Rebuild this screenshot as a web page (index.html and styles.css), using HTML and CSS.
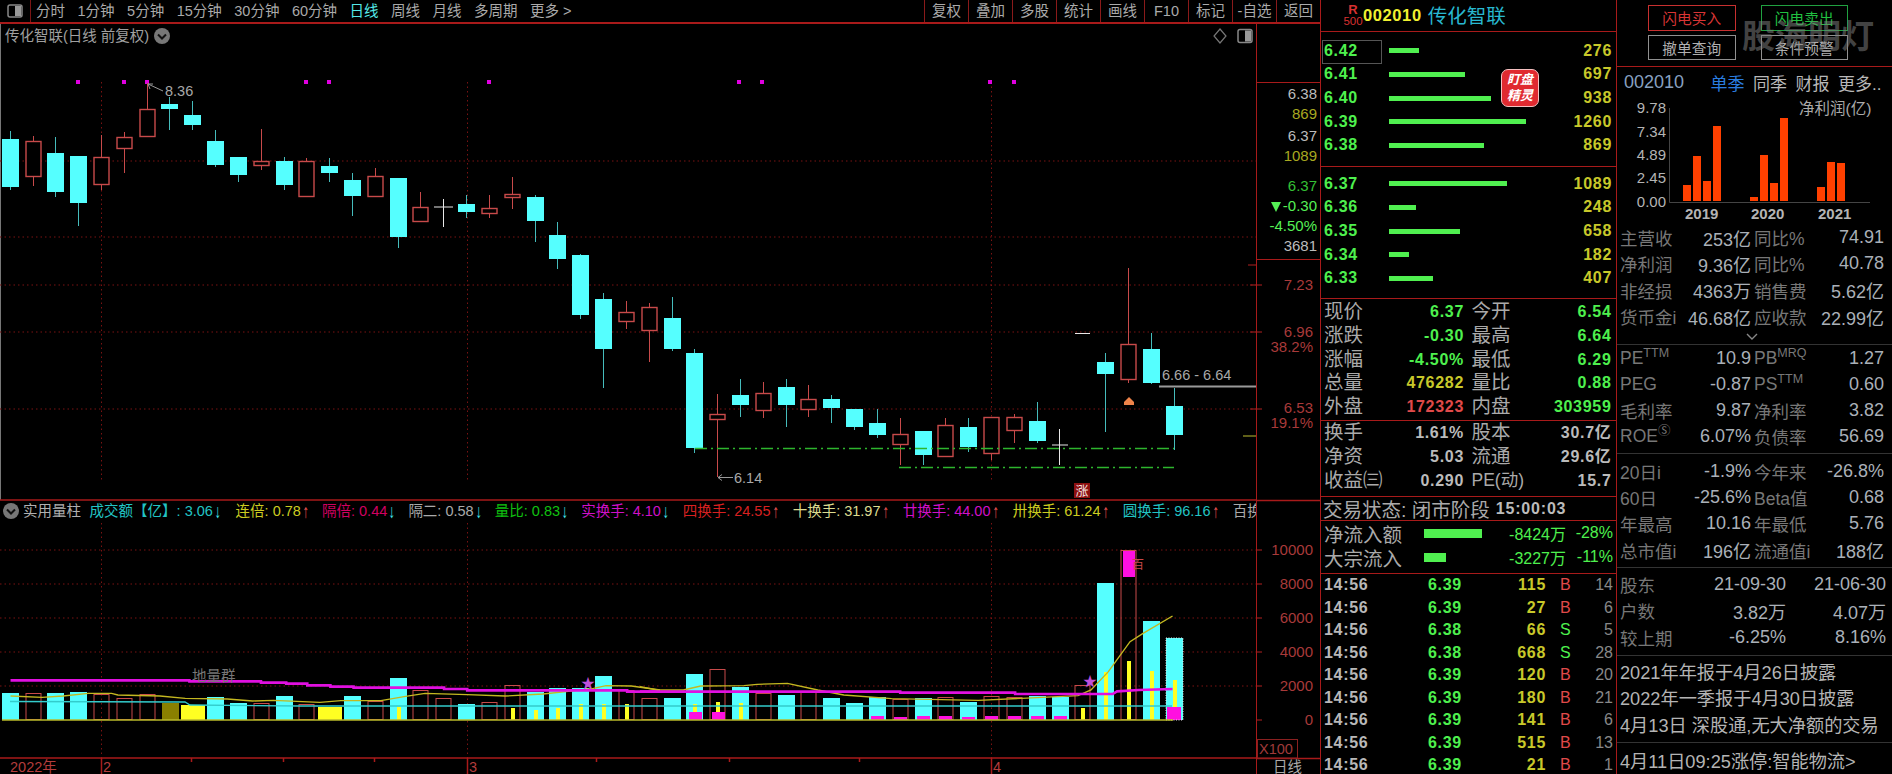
FILE: index.html
```html
<!DOCTYPE html>
<html lang="zh-CN">
<head>
<meta charset="utf-8">
<title>传化智联</title>
<link rel="stylesheet" href="styles.css">
</head>
<body>
<div class="app">
  <div class="main">
    <div class="toolbar">
      <div class="tb-icon">
        <svg class="panel-ico" width="16" height="14" viewBox="0 0 16 14"><rect x="1" y="1" width="14" height="12" rx="2" fill="none" stroke="#888" stroke-width="1.5"/><rect x="8" y="2" width="6" height="10" fill="#999"/></svg>
      </div>
      <div class="periods">
        <span>分时</span><span>1分钟</span><span>5分钟</span><span>15分钟</span><span>30分钟</span><span>60分钟</span><span class="on">日线</span><span>周线</span><span>月线</span><span>多周期</span><span>更多 &gt;</span>
      </div>
      <div class="tools">
        <span>复权</span><span>叠加</span><span>多股</span><span>统计</span><span>画线</span><span>F10</span><span>标记</span><span>-自选</span><span>返回</span>
      </div>
    </div>
    <div class="stage">
      <div class="plot">
        <svg class="chart" width="1256" height="750" viewBox="0 24 1256 750">
          <path class="edge" d="M.5 24V500"/>
          <!-- grid -->
          <path class="grid" d="M0 161H1256M0 237H1256M0 285H1256M0 332H1256M0 409H1256M0 550H1256M0 584H1256M0 618H1256M0 652H1256M0 686H1256"/>
          <path class="grid" d="M101.5 82V480M467.5 82V480M991.5 82V480M101.5 523V758M467.5 523V758M991.5 523V758"/>
          <path class="pane" d="M0 500H1256M0 758H1256"/>
          <!-- signal dots -->
          <g class="dot">
            <rect x="76" y="80" width="4" height="4"/><rect x="122" y="80" width="4" height="4"/><rect x="145" y="80" width="4" height="4"/><rect x="304" y="80" width="4" height="4"/><rect x="327" y="80" width="4" height="4"/><rect x="487" y="80" width="4" height="4"/><rect x="737" y="80" width="4" height="4"/><rect x="760" y="80" width="4" height="4"/><rect x="988" y="80" width="4" height="4"/><rect x="1012" y="80" width="4" height="4"/>
          </g>
          <!-- wicks -->
          <path class="wick-d" d="M10.5 131V190M55.5 137V197M78.5 156V226M169.5 97V130M192.5 101V130M215.5 130V167M238.5 157V182M284.5 157V190M329.5 158V182M352.5 173V216M398.5 178V248M466.5 195V218M535.5 195V242M557.5 222V269M580.5 254V319M603.5 293V388M672.5 297V351M694.5 349V453M740.5 379V417M786.5 379V427M831.5 395V423M854.5 409V430M877.5 409V438M923.5 431V465M968.5 418V452M1037.5 402V443M1105.5 353V432M1151.5 333V384M1174.5 388V450"/>
          <path class="wick-u" d="M33.5 136V186M101.5 135V190M124.5 132V173M147.5 83V136M261.5 129V170M306.5 158V196M375.5 168V196M420.5 192V221M489.5 195V218M512.5 177V209M626.5 301V329M649.5 303V362M717.5 394V477M763.5 382V418M808.5 385V417M900.5 418V465M945.5 418V456M991.5 417V460M1014.5 414V443M1128.5 268V383"/>
          <path class="wick-w" d="M443.5 199V227M434 207H453M1059.5 429V465M1052 445H1068M1075 333.5H1090"/>
          <!-- bodies, falling -->
          <g class="body-d">
            <rect x="2" y="139" width="17" height="48"/><rect x="47" y="153" width="17" height="39"/><rect x="70" y="156" width="17" height="47"/><rect x="161" y="104" width="17" height="5"/><rect x="184" y="115" width="17" height="10"/><rect x="207" y="141" width="17" height="24"/><rect x="230" y="157" width="17" height="18"/><rect x="276" y="161" width="17" height="24"/><rect x="321" y="166" width="17" height="7"/><rect x="344" y="180" width="17" height="16"/><rect x="390" y="178" width="17" height="59"/><rect x="458" y="204" width="17" height="8"/><rect x="527" y="197" width="17" height="24"/><rect x="549" y="235" width="17" height="24"/><rect x="572" y="255" width="17" height="60"/><rect x="595" y="299" width="17" height="50"/><rect x="664" y="318" width="17" height="31"/><rect x="686" y="353" width="17" height="95"/><rect x="732" y="395" width="17" height="10"/><rect x="778" y="387" width="17" height="18"/><rect x="823" y="399" width="17" height="9"/><rect x="846" y="409" width="17" height="18"/><rect x="869" y="423" width="17" height="12"/><rect x="915" y="431" width="17" height="24"/><rect x="960" y="427" width="17" height="20"/><rect x="1029" y="421" width="17" height="20"/><rect x="1097" y="362" width="17" height="12"/><rect x="1143" y="349" width="17" height="34"/><rect x="1166" y="406" width="17" height="29"/>
          </g>
          <!-- bodies, rising -->
          <g class="body-u">
            <rect x="26" y="141.5" width="15" height="35"/><rect x="94" y="157.5" width="15" height="27"/><rect x="117" y="137.5" width="15" height="11"/><rect x="140" y="109.5" width="15" height="27"/><rect x="254" y="161.5" width="15" height="4"/><rect x="299" y="161.5" width="15" height="35"/><rect x="368" y="176.5" width="15" height="20"/><rect x="413" y="207.5" width="15" height="14"/><rect x="482" y="208.5" width="15" height="5"/><rect x="505" y="194.5" width="15" height="3"/><rect x="619" y="312.5" width="15" height="9"/><rect x="642" y="307.5" width="15" height="23"/><rect x="710" y="414.5" width="15" height="5"/><rect x="756" y="393.5" width="15" height="17"/><rect x="801" y="399.5" width="15" height="10"/><rect x="893" y="434.5" width="15" height="10"/><rect x="938" y="425.5" width="15" height="31"/><rect x="984" y="417.5" width="15" height="36"/><rect x="1007" y="417.5" width="15" height="13"/><rect x="1121" y="344.5" width="15" height="35"/>
          </g>
          <!-- price annotations -->
          <path class="note-line" d="M163 91L148 84M148 84L153 84M148 84L150 89M733 477.5H718M718 477.5L722 474.5M718 477.5L722 480.5"/>
          <text class="note" x="165" y="96">8.36</text>
          <text class="note" x="734" y="483">6.14</text>
          <text class="note" x="1162" y="380">6.66 - 6.64</text>
          <path class="support" d="M695 448.5H1174M899 467.5H1174"/>
          <path class="resist" d="M1159 386.5H1256"/>
          <path class="tri" d="M1129 397l5 5v3h-10v-3z"/>
          <path class="tick" d="M1248 265H1256M1250 285H1256M1250 332H1256M1250 409H1256"/>
          <path class="tick-o" d="M1243 436H1256"/>
          <rect class="limit" x="1074" y="483" width="16" height="15"/>
          <text class="limit-t" x="1082" y="495">涨</text>

          <!-- volume -->
          <g class="vol-d">
            <rect x="2" y="693" width="17" height="27"/><rect x="47" y="693" width="17" height="27"/><rect x="70" y="692" width="17" height="28"/><rect x="207" y="697" width="17" height="23"/><rect x="230" y="703" width="17" height="17"/><rect x="276" y="696" width="17" height="24"/><rect x="344" y="696" width="17" height="24"/><rect x="390" y="678" width="17" height="42"/><rect x="458" y="704" width="17" height="16"/><rect x="527" y="692" width="17" height="28"/><rect x="549" y="688" width="17" height="32"/><rect x="572" y="688" width="17" height="32"/><rect x="595" y="676" width="17" height="44"/><rect x="664" y="698" width="17" height="22"/><rect x="686" y="674" width="17" height="46"/><rect x="732" y="687" width="17" height="33"/><rect x="778" y="695" width="17" height="25"/><rect x="823" y="698" width="17" height="22"/><rect x="846" y="703" width="17" height="17"/><rect x="869" y="697" width="17" height="23"/><rect x="915" y="698" width="17" height="22"/><rect x="960" y="702" width="17" height="18"/><rect x="1029" y="696" width="17" height="24"/><rect x="1052" y="697" width="17" height="23"/><rect x="1097" y="583" width="17" height="137"/><rect x="1143" y="621" width="17" height="99"/><rect x="1166" y="638" width="17" height="82"/>
          </g>
          <g class="vol-u">
            <rect x="26" y="693.5" width="15" height="26"/><rect x="94" y="694.5" width="15" height="25"/><rect x="117" y="698.5" width="15" height="21"/><rect x="140" y="694.5" width="15" height="25"/><rect x="254" y="703.5" width="15" height="16"/><rect x="299" y="704.5" width="15" height="15"/><rect x="368" y="701.5" width="15" height="18"/><rect x="413" y="690.5" width="15" height="29"/><rect x="436" y="698.5" width="15" height="21"/><rect x="482" y="702.5" width="15" height="17"/><rect x="505" y="685.5" width="15" height="34"/><rect x="619" y="690.5" width="15" height="29"/><rect x="642" y="698.5" width="15" height="21"/><rect x="710" y="669.5" width="15" height="50"/><rect x="756" y="693.5" width="15" height="26"/><rect x="801" y="691.5" width="15" height="28"/><rect x="893" y="699.5" width="15" height="20"/><rect x="938" y="697.5" width="15" height="22"/><rect x="984" y="696.5" width="15" height="23"/><rect x="1007" y="697.5" width="15" height="22"/><rect x="1075" y="685.5" width="15" height="34"/><rect x="1121" y="550.5" width="15" height="169"/>
          </g>
          <rect class="vol-o" x="162" y="703" width="17" height="17"/>
          <rect class="vol-y" x="181" y="705" width="24" height="15"/>
          <rect class="vol-y" x="318" y="707" width="24" height="13"/>
          <g class="vol-y">
            <rect x="397" y="707" width="4" height="13"/><rect x="511" y="708" width="4" height="12"/><rect x="534" y="710" width="4" height="10"/><rect x="556" y="708" width="4" height="12"/><rect x="579" y="704" width="4" height="16"/><rect x="602" y="704" width="4" height="16"/><rect x="625" y="704" width="4" height="16"/><rect x="693" y="704" width="4" height="16"/><rect x="716" y="702" width="4" height="18"/><rect x="739" y="703" width="4" height="17"/><rect x="1081" y="708" width="4" height="12"/><rect x="1104" y="672" width="4" height="48"/><rect x="1127" y="661" width="4" height="59"/><rect x="1150" y="671" width="4" height="49"/><rect x="1173" y="680" width="4" height="40"/>
          </g>
          <g class="vol-m">
            <rect x="689" y="712" width="13" height="8"/><rect x="712" y="712" width="13" height="8"/><rect x="871" y="716" width="13" height="4"/><rect x="894" y="717" width="13" height="3"/><rect x="917" y="716" width="13" height="4"/><rect x="939" y="716" width="13" height="4"/><rect x="962" y="717" width="13" height="3"/><rect x="985" y="716" width="13" height="4"/><rect x="1008" y="716" width="13" height="4"/><rect x="1031" y="716" width="13" height="4"/><rect x="1054" y="716" width="13" height="4"/><rect x="1123" y="551" width="12" height="26"/><rect x="1167" y="707" width="14" height="13"/>
          </g>
          <rect class="vol-dash" x="1166" y="638" width="17" height="82"/>
          <text class="vol-note" x="1132" y="569">百</text>
          <path class="base" d="M2 720H1173"/>
          <polyline class="line-t" points="10,701.5 185,702 190,705 300,706 1172,706"/>
          <g transform="translate(0 490) scale(.42092 .33333)">
            <polyline class="line-g" points="25,618 100,622 150,618 210,610 265,610 280,615 380,618 440,625 540,627 600,633 650,631 760,637 810,632 905,632 960,620 1010,610 1110,614 1200,618 1290,612 1350,604 1410,595 1440,587 1500,588 1568,600"/>
            <polyline class="line-m" points="25,571 450,571 450,574 620,574 620,578 680,578 680,581 730,581 730,586 785,586 785,590 840,590 840,593 1055,593 1055,597 1110,597 1110,601 1490,601 1490,605 1568,605"/>
          </g>
          <g transform="translate(640 490) scale(.43367 .33333)">
            <polyline class="line-g" points="0,590 40,600 100,600 140,588 240,587 270,583 340,580 410,600 470,615 580,626 780,631 880,625 1010,617 1040,600 1080,545 1130,455 1160,430 1228,378"/>
            <polyline class="line-m" points="0,605 600,605 600,608 865,608 865,612 1090,612 1100,604 1150,600 1228,597"/>
          </g>
          <text class="star" x="581" y="688">★</text>
          <text class="star" x="1083" y="686">★</text>
          <text class="ghost" x="192" y="681">地量群</text>
          <!-- date axis -->
          <path class="pane" d="M101.5 758V774M467.5 758V774M991.5 758V774M191.5 758V762M283.5 758V762M374.5 758V762M596.5 758V762M729.5 758V762M859.5 758V762"/>
          <text class="date" x="10" y="772">2022年</text>
          <text class="date" x="103" y="772">2</text>
          <text class="date" x="469" y="772">3</text>
          <text class="date" x="993" y="772">4</text>
        </svg>
        <div class="pane-title">
          <span>传化智联(日线 前复权)</span>
          <svg class="chev" width="16" height="16" viewBox="0 0 16 16"><circle cx="8" cy="8" r="8" fill="#777"/><path d="M4 6.5L8 10.5L12 6.5" fill="none" stroke="#111" stroke-width="2"/></svg>
        </div>
        <div class="pane-tools">
          <svg width="14" height="16" viewBox="0 0 14 16"><path d="M7 1L13 8L7 15L1 8Z" fill="none" stroke="#777" stroke-width="1.2"/></svg>
          <svg width="16" height="16" viewBox="0 0 16 16"><rect x="1" y="1.5" width="14" height="13" rx="2" fill="none" stroke="#888" stroke-width="1.5"/><rect x="8" y="2.5" width="6" height="11" fill="#999"/></svg>
        </div>
        <div class="indicators">
          <span class="ind i-name"><svg class="chev chev-s" width="16" height="16" viewBox="0 0 16 16"><circle cx="8" cy="8" r="8" fill="#777"/><path d="M4 6.5L8 10.5L12 6.5" fill="none" stroke="#111" stroke-width="2"/></svg>实用量柱</span>
          <span class="ind w146 c-teal">成交额【亿】: 3.06<b class="dn">↓</b></span>
          <span class="ind w86 c-yel">连倍: 0.78<b class="up">↑</b></span>
          <span class="ind w86 c-crim">隔倍: 0.44<b class="dn">↓</b></span>
          <span class="ind w86 c-gray">隔二: 0.58<b class="dn">↓</b></span>
          <span class="ind w86 c-green">量比: 0.83<b class="dn">↓</b></span>
          <span class="ind w101 c-mag">实换手: 4.10<b class="dn">↓</b></span>
          <span class="ind w110 c-red">四换手: 24.55<b class="up">↑</b></span>
          <span class="ind w110 c-pale">十换手: 31.97<b class="up">↑</b></span>
          <span class="ind w110 c-mag">廿换手: 44.00<b class="up">↑</b></span>
          <span class="ind w110 c-yel">卅换手: 61.24<b class="up">↑</b></span>
          <span class="ind w110 c-teal">圆换手: 96.16<b class="up">↑</b></span>
          <span class="ind c-gray">百换手</span>
        </div>
      </div>
      <div class="axis">
        <div class="ax-top"></div>
        <div class="ax-info">
          <div class="ax-row c-white">6.38</div>
          <div class="ax-row c-olive">869</div>
          <div class="ax-row c-white ax-gap">6.37</div>
          <div class="ax-row c-olive">1089</div>
          <div class="ax-row c-dgreen ax-gap-l">6.37</div>
          <div class="ax-row c-lgreen"><i class="dn-tri"></i>-0.30</div>
          <div class="ax-row c-lgreen">-4.50%</div>
          <div class="ax-row c-white">3681</div>
        </div>
        <svg class="ax-svg" width="63" height="514" viewBox="1257 260 63 514">
          <path class="tick" d="M1257 285H1262M1257 332H1262M1257 409H1262M1257 550H1262M1257 584H1262M1257 618H1262M1257 652H1262M1257 686H1262M1257 720H1262"/>
          <path class="ax-line" d="M1256 500.5H1320M1256 758.5H1320"/>
          <g class="ax-t">
            <text x="1313" y="290">7.23</text>
            <text x="1313" y="337">6.96</text>
            <text x="1313" y="352">38.2%</text>
            <text x="1313" y="413">6.53</text>
            <text x="1313" y="428">19.1%</text>
            <text x="1313" y="555">10000</text>
            <text x="1313" y="589">8000</text>
            <text x="1313" y="623">6000</text>
            <text x="1313" y="657">4000</text>
            <text x="1313" y="691">2000</text>
            <text x="1313" y="725">0</text>
          </g>
          <rect class="x100" x="1257.5" y="739.5" width="40" height="18.5"/>
          <text class="x100-t" x="1259" y="754">X100</text>
          <text class="ax-day" x="1273" y="772">日线</text>
        </svg>
      </div>
    </div>
  </div>

  <div class="quote">
    <div class="q-head">
      <div class="logo-r"><b>R</b><span>500</span></div>
      <span class="q-code">002010</span>
      <span class="q-name">传化智联</span>
    </div>
    <div class="book book-s">
      <div class="b-row"><span class="b-p active">6.42</span><i class="b-bar" style="width:30px"></i><span class="b-v">276</span></div>
      <div class="b-row"><span class="b-p">6.41</span><i class="b-bar" style="width:76px"></i><span class="b-v">697</span></div>
      <div class="b-row"><span class="b-p">6.40</span><i class="b-bar" style="width:102px"></i><span class="b-v">938</span></div>
      <div class="b-row"><span class="b-p">6.39</span><i class="b-bar" style="width:137px"></i><span class="b-v">1260</span></div>
      <div class="b-row"><span class="b-p">6.38</span><i class="b-bar" style="width:95px"></i><span class="b-v">869</span></div>
    </div>
    <div class="book book-b">
      <div class="b-row"><span class="b-p">6.37</span><i class="b-bar" style="width:118px"></i><span class="b-v">1089</span></div>
      <div class="b-row"><span class="b-p">6.36</span><i class="b-bar" style="width:27px"></i><span class="b-v">248</span></div>
      <div class="b-row"><span class="b-p">6.35</span><i class="b-bar" style="width:71px"></i><span class="b-v">658</span></div>
      <div class="b-row"><span class="b-p">6.34</span><i class="b-bar" style="width:20px"></i><span class="b-v">182</span></div>
      <div class="b-row"><span class="b-p">6.33</span><i class="b-bar" style="width:44px"></i><span class="b-v">407</span></div>
    </div>
    <div class="badge">盯盘<br>精灵</div>
    <div class="q-tbl q1">
      <div class="kv"><span>现价</span><b class="g">6.37</b></div><div class="kv"><span>今开</span><b class="g">6.54</b></div>
      <div class="kv"><span>涨跌</span><b class="g">-0.30</b></div><div class="kv"><span>最高</span><b class="g">6.64</b></div>
      <div class="kv"><span>涨幅</span><b class="g">-4.50%</b></div><div class="kv"><span>最低</span><b class="g">6.29</b></div>
      <div class="kv"><span>总量</span><b class="y">476282</b></div><div class="kv"><span>量比</span><b class="g">0.88</b></div>
      <div class="kv"><span>外盘</span><b class="r">172323</b></div><div class="kv"><span>内盘</span><b class="g">303959</b></div>
    </div>
    <div class="q-tbl q2">
      <div class="kv"><span>换手</span><b class="w">1.61%</b></div><div class="kv"><span>股本</span><b class="w">30.7亿</b></div>
      <div class="kv"><span>净资</span><b class="w">5.03</b></div><div class="kv"><span>流通</span><b class="w">29.6亿</b></div>
      <div class="kv"><span>收益㈢</span><b class="w">0.290</b></div><div class="kv"><span class="pe">PE(动)</span><b class="w">15.7</b></div>
    </div>
    <div class="status"><span>交易状态: 闭市阶段</span><b>15:00:03</b></div>
    <div class="flows">
      <div class="f-row"><span class="f-l">净流入额</span><i class="f-bar f58"></i><span class="f-v">-8424万</span><span class="f-p">-28%</span></div>
      <div class="f-row"><span class="f-l">大宗流入</span><i class="f-bar f22"></i><span class="f-v">-3227万</span><span class="f-p">-11%</span></div>
    </div>
    <div class="ticks">
      <div class="t-row"><b class="t">14:56</b><b class="p">6.39</b><b class="v">115</b><span class="bs b">B</span><span class="n">14</span></div>
      <div class="t-row"><b class="t">14:56</b><b class="p">6.39</b><b class="v">27</b><span class="bs b">B</span><span class="n">6</span></div>
      <div class="t-row"><b class="t">14:56</b><b class="p">6.38</b><b class="v">66</b><span class="bs s">S</span><span class="n">5</span></div>
      <div class="t-row"><b class="t">14:56</b><b class="p">6.38</b><b class="v">668</b><span class="bs s">S</span><span class="n">28</span></div>
      <div class="t-row"><b class="t">14:56</b><b class="p">6.39</b><b class="v">120</b><span class="bs b">B</span><span class="n">20</span></div>
      <div class="t-row"><b class="t">14:56</b><b class="p">6.39</b><b class="v">180</b><span class="bs b">B</span><span class="n">21</span></div>
      <div class="t-row"><b class="t">14:56</b><b class="p">6.39</b><b class="v">141</b><span class="bs b">B</span><span class="n">6</span></div>
      <div class="t-row"><b class="t">14:56</b><b class="p">6.39</b><b class="v">515</b><span class="bs b">B</span><span class="n">13</span></div>
      <div class="t-row"><b class="t">14:56</b><b class="p">6.39</b><b class="v">21</b><span class="bs b">B</span><span class="n">1</span></div>
    </div>
  </div>

  <div class="side">
    <div class="actions">
      <a class="btn btn-r">闪电买入</a><a class="btn btn-g">闪电卖出</a>
      <a class="btn btn-w">撤单查询</a><a class="btn btn-w">条件预警</a>
      <div class="mark">股海明灯</div>
    </div>
    <div class="tabs">
      <span class="t-code">002010</span><span class="t-on">单季</span><span>同季</span><span>财报</span><span>更多..</span>
    </div>
    <svg class="mini" width="275" height="129" viewBox="1617 97 275 129">
      <path class="mini-ax" d="M1669.5 108V202.5H1870"/>
      <g class="mini-bars">
        <rect x="1683" y="185" width="8" height="16"/><rect x="1693" y="156" width="8" height="45"/><rect x="1703" y="181" width="8" height="20"/><rect x="1713" y="126" width="8" height="75"/>
        <rect x="1750" y="197" width="8" height="4"/><rect x="1760" y="155" width="8" height="46"/><rect x="1770" y="183" width="8" height="18"/><rect x="1780" y="118" width="8" height="83"/>
        <rect x="1817" y="187" width="8" height="14"/><rect x="1827" y="162" width="8" height="39"/><rect x="1837" y="163" width="8" height="38"/>
      </g>
      <g class="mini-y">
        <text x="1666" y="113">9.78</text><text x="1666" y="137">7.34</text><text x="1666" y="160">4.89</text><text x="1666" y="183">2.45</text><text x="1666" y="207">0.00</text>
      </g>
      <g class="mini-x">
        <text x="1685" y="219">2019</text><text x="1751" y="219">2020</text><text x="1818" y="219">2021</text>
      </g>
      <text class="mini-title" x="1799" y="114">净利润(亿)</text>
    </svg>
    <div class="fin g-a">
      <div class="kv"><span>主营收</span><b>253亿</b></div><div class="kv"><span>同比%</span><b>74.91</b></div>
      <div class="kv"><span>净利润</span><b>9.36亿</b></div><div class="kv"><span>同比%</span><b>40.78</b></div>
      <div class="kv"><span>非经损</span><b>4363万</b></div><div class="kv"><span>销售费</span><b>5.62亿</b></div>
      <div class="kv"><span>货币金i</span><b>46.68亿</b></div><div class="kv"><span>应收款</span><b>22.99亿</b></div>
    </div>
    <div class="more"><svg width="12" height="7" viewBox="0 0 12 7"><path d="M1 1L6 6L11 1" fill="none" stroke="#888" stroke-width="1.4"/></svg></div>
    <div class="fin g-b sep">
      <div class="kv"><span>PE<sup>TTM</sup></span><b>10.9</b></div><div class="kv"><span>PB<sup>MRQ</sup></span><b>1.27</b></div>
      <div class="kv"><span>PEG</span><b>-0.87</b></div><div class="kv"><span>PS<sup>TTM</sup></span><b>0.60</b></div>
      <div class="kv"><span>毛利率</span><b>9.87</b></div><div class="kv"><span>净利率</span><b>3.82</b></div>
      <div class="kv"><span>ROE<sup>Ⓢ</sup></span><b>6.07%</b></div><div class="kv"><span>负债率</span><b>56.69</b></div>
    </div>
    <div class="fin g-c sep">
      <div class="kv"><span>20日i</span><b>-1.9%</b></div><div class="kv"><span>今年来</span><b>-26.8%</b></div>
      <div class="kv"><span>60日</span><b>-25.6%</b></div><div class="kv"><span>Beta值</span><b>0.68</b></div>
      <div class="kv"><span>年最高</span><b>10.16</b></div><div class="kv"><span>年最低</span><b>5.76</b></div>
      <div class="kv"><span>总市值i</span><b>196亿</b></div><div class="kv"><span>流通值i</span><b>188亿</b></div>
    </div>
    <div class="fin g-d sep">
      <div class="kv"><span>股东</span><b>21-09-30</b></div><b class="v2">21-06-30</b>
      <div class="kv"><span>户数</span><b>3.82万</b></div><b class="v2">4.07万</b>
      <div class="kv"><span>较上期</span><b>-6.25%</b></div><b class="v2">8.16%</b>
    </div>
    <div class="news sep">
      <div>2021年年报于4月26日披露</div>
      <div>2022年一季报于4月30日披露</div>
      <div>4月13日 深股通,无大净额的交易</div>
    </div>
    <div class="news news-last sep">
      <div>4月11日09:25涨停:智能物流&gt;</div>
    </div>
  </div>
</div>
</body>
</html>
```
FILE: styles.css
```css
* { box-sizing: border-box; }
html, body { margin: 0; padding: 0; background: #000; }
body {
  width: 1892px; height: 774px; overflow: hidden;
  font-family: "Liberation Sans", "Noto Sans CJK SC", "DejaVu Sans", sans-serif;
  color: #aaa;
}
.app { display: flex; width: 1892px; height: 774px; background: #000; overflow: hidden; }
.main { width: 1320px; flex: none; display: flex; flex-direction: column; }

/* toolbar */
.toolbar { display: flex; height: 24px; flex: none; border-bottom: 2px solid #a81a1a; font-size: 14.5px; line-height: 22px; color: #aaa; }
.tb-icon { width: 31px; flex: none; border-right: 1px solid #7a1515; display: flex; align-items: center; justify-content: center; }
.panel-ico { margin-left: -1px; }
.periods { display: flex; gap: 12.5px; padding-left: 5px; white-space: nowrap; }
.periods .on { color: #55e8e8; }
.tools { margin-left: auto; display: flex; }
.tools span { width: 44px; text-align: center; border-left: 1px solid #8a1a1a; white-space: nowrap; }

.stage { display: flex; flex: 1; min-height: 0; }
.plot { position: relative; width: 1256px; height: 750px; flex: none; overflow: hidden; }
.chart { display: block; }

/* chart shapes */
.edge { stroke: #777; stroke-width: 1; fill: none; }
.grid { stroke: #7a1212; stroke-width: 1; stroke-dasharray: 1.5 3; fill: none; }
.pane { stroke: #a81a1a; stroke-width: 1.5; fill: none; }
.dot rect { fill: #e000e0; }
.wick-d { stroke: #45bcbc; stroke-width: 1; fill: none; }
.wick-u { stroke: #c84a4a; stroke-width: 1; fill: none; }
.wick-w { stroke: #e8e8e8; stroke-width: 1; fill: none; }
.body-d rect { fill: #55ffff; }
.body-u rect { fill: #000; stroke: #c84a4a; stroke-width: 1.4; }
.note-line { stroke: #999; stroke-width: 1; fill: none; }
.note { font-size: 14.5px; fill: #a8a8a8; }
.support { stroke: #2db52d; stroke-width: 1.6; stroke-dasharray: 12 4 2 4; fill: none; }
.resist { stroke: #999; stroke-width: 2; fill: none; }
.tri { fill: #f0844a; }
.tick { stroke: #b02020; stroke-width: 1; fill: none; }
.tick-o { stroke: #7f7f20; stroke-width: 1.5; fill: none; }
.limit { fill: #8c1010; }
.limit-t { font-size: 13px; fill: #f0e0e0; text-anchor: middle; }
.vol-d rect { fill: #55ffff; }
.vol-u rect { fill: none; stroke: #c84a4a; stroke-width: 1; }
.vol-o { fill: #8a8000; }
.vol-y, .vol-y rect { fill: #ffff22; }
.vol-m rect { fill: #ff10e0; }
.vol-dash { fill: none; stroke: #e8e8e8; stroke-width: 1; stroke-dasharray: 1 1.5; }
.vol-note { font-size: 12px; fill: #c84a4a; }
.base { stroke: #b9b92a; stroke-width: 1.5; fill: none; }
.line-t { stroke: #3cc; stroke-width: 1.3; fill: none; }
.line-g { stroke: #c4b820; stroke-width: 1.4; fill: none; vector-effect: non-scaling-stroke; }
.line-m { stroke: #e010e0; stroke-width: 2.6; fill: none; vector-effect: non-scaling-stroke; }
.star { font-size: 14px; fill: #c050d8; }
.ghost { font-size: 14.5px; fill: #777; }
.date { font-size: 14.5px; fill: #b43c3c; }

/* overlays on the plot */
.pane-title { position: absolute; left: 5px; top: 3px; display: flex; align-items: center; gap: 5px; font-size: 14.5px; line-height: 18px; color: #a0a0a0; white-space: nowrap; }
.chev { flex: none; }
.pane-tools { position: absolute; right: 3px; top: 4px; display: flex; gap: 10px; }
.indicators { position: absolute; left: 3px; top: 477px; display: flex; width: 1253px; height: 20px; overflow: hidden; font-size: 14.5px; line-height: 20px; white-space: nowrap; }
.ind { flex: none; }
.ind b { display: inline-block; font-size: 19px; font-weight: 400; line-height: 16px; vertical-align: -2px; transform: scaleX(.7); margin-left: 0; }
.i-name { width: 86.6px; color: #b0b0b0; display: flex; align-items: center; gap: 4px; }
.w146 { width: 146px; }
.w86 { width: 86.4px; }
.w101 { width: 101.5px; }
.w110 { width: 110px; }
.c-teal { color: #22c4c4; }
.c-yel { color: #cccc20; }
.c-crim { color: #d00060; }
.c-gray { color: #aaa; }
.c-green { color: #10c010; }
.c-mag { color: #d010c8; }
.c-red { color: #d82020; }
.c-pale { color: #dcdc90; }
.dn { color: #40e0e8; }
.up { color: #e85050; }

/* price axis */
.axis { width: 64px; flex: none; border-left: 1px solid #a81a1a; display: flex; flex-direction: column; }
.ax-top { height: 59px; flex: none; border-bottom: 1px solid #a81a1a; }
.ax-info { height: 177px; flex: none; padding: 1px 3px 0 0; border-bottom: 1px solid #a81a1a; font-size: 15px; text-align: right; }
.ax-row { height: 20px; line-height: 20px; white-space: nowrap; }
.ax-gap { margin-top: 2px; }
.ax-gap-l { margin-top: 10px; }
.c-white { color: #bcbcbc; }
.c-olive { color: #a8a820; }
.c-dgreen { color: #35c035; }
.c-lgreen { color: #55f055; }
.dn-tri { display: inline-block; width: 0; height: 0; margin-right: 2px; border-left: 5px solid transparent; border-right: 5px solid transparent; border-top: 10px solid #55f055; vertical-align: -1px; }
.ax-svg { display: block; flex: none; }
.ax-line { stroke: #a81a1a; stroke-width: 1.5; fill: none; }
.ax-t text { font-size: 15px; fill: #a83a3a; text-anchor: end; }
.x100 { fill: none; stroke: #8a2020; stroke-width: 1; }
.x100-t { font-size: 14.5px; fill: #a03a3a; }
.ax-day { font-size: 14.5px; fill: #aaa; }

/* quote column */
.quote { position: relative; width: 297px; flex: none; border-left: 1px solid #a81a1a; border-right: 1px solid #a81a1a; overflow: hidden; }
.q-head { display: flex; align-items: center; height: 32px; padding-left: 22px; border-bottom: 1px solid #a81a1a; white-space: nowrap; }
.logo-r { width: 20px; flex: none; display: flex; flex-direction: column; align-items: center; color: #d83030; font-size: 11.5px; line-height: 11px; }
.logo-r b { font-size: 13px; line-height: 12px; }
.q-code { color: #f0f030; font-size: 16.5px; font-weight: 700; letter-spacing: .6px; margin-right: 6px; }
.q-name { color: #28b8d0; font-size: 19.5px; line-height: 28px; }
.book { border-bottom: 1px solid #a81a1a; }
.book-s { height: 135px; padding-top: 7px; }
.book-b { height: 132px; padding-top: 5px; }
.b-row { display: flex; align-items: center; height: 23.67px; padding: 0 4px 0 3px; font-size: 16px; font-weight: 700; letter-spacing: .7px; }
.b-p { position: relative; width: 65px; flex: none; color: #4ef04e; }
.active::after { content: ""; position: absolute; left: -2px; top: -2px; width: 58px; height: 22px; border: 1px solid #555; }
.b-bar { height: 5px; background: #50f050; }
.b-v { margin-left: auto; color: #c8c82a; }
.badge { position: absolute; left: 180px; top: 69px; width: 38px; height: 38px; padding-top: 2px; border: 1px solid #f4c0c0; border-radius: 7px; background: #e02a30; color: #fff; font-size: 13px; line-height: 16px; font-weight: 700; font-style: italic; text-align: center; }
.q-tbl { display: grid; grid-template-columns: 140px 140px; column-gap: 7.5px; padding-left: 3px; border-bottom: 1px solid #a81a1a; grid-auto-rows: 23.67px; }
.q1 { height: 122px; padding-top: 1px; }
.q2 { height: 76px; }
.q-tbl .kv { display: flex; justify-content: space-between; align-items: center; white-space: nowrap; font-size: 19.5px; line-height: 23px; color: #aaa; }
.q-tbl b { font-size: 16px; letter-spacing: .7px; }
.q-tbl .pe { font-size: 17.5px; }
.g { color: #4ef04e; }
.y { color: #c8c82a; }
.r { color: #e04a4a; }
.w { color: #bbb; }
.status { display: flex; align-items: center; gap: 6px; height: 24px; padding-left: 2px; border-bottom: 1px solid #a81a1a; font-size: 19.5px; color: #aaa; white-space: nowrap; }
.status b { font-size: 16px; letter-spacing: .8px; color: #bbb; }
.flows { height: 53px; padding-top: 0; border-bottom: 1px solid #a81a1a; }
.f-row { display: flex; align-items: center; height: 24px; padding-left: 3px; white-space: nowrap; }
.f-l { width: 99.5px; flex: none; font-size: 19.5px; color: #aaa; }
.f-bar { height: 9px; background: #50f050; flex: none; }
.f58 { width: 58px; }
.f22 { width: 22px; }
.f-v { margin-left: auto; color: #4ef04e; font-size: 16px; }
.f-p { width: 50px; flex: none; text-align: right; color: #4ef04e; font-size: 16px; padding-right: 3px; }
.t-row { display: grid; grid-template-columns: 104px 50px 68px 30px 37px; align-items: center; height: 22.5px; padding-left: 3px; font-size: 16px; white-space: nowrap; }
.t-row .t { color: #b8b8b8; letter-spacing: .7px; }
.t-row .p { color: #4ef04e; letter-spacing: .7px; }
.t-row .v { color: #c8c82a; text-align: right; letter-spacing: .7px; }
.bs { padding-left: 14px; }
.bs.b { color: #e04a4a; }
.bs.s { color: #4ef04e; }
.n { text-align: right; color: #888; }

/* side column */
.side { flex: 1; min-width: 0; overflow: hidden; }
.actions { position: relative; display: grid; grid-template-columns: 87.5px 87.5px; grid-template-rows: 25.5px 25.5px; column-gap: 25px; row-gap: 4px; height: 67px; padding: 5px 0 0 31px; border-bottom: 1px solid #a81a1a; }
.btn { display: flex; align-items: center; justify-content: center; font-size: 14.7px; border: 1px solid #888; color: #aaa; white-space: nowrap; }
.btn-r { border-color: #c83030; color: #d83535; }
.btn-g { border-color: #20a040; color: #20c040; }
.btn-w { border-color: #909090; color: #b0b0b0; }
.mark { position: absolute; left: 125px; top: 16px; font-size: 33px; line-height: 42px; font-weight: 700; color: rgba(125, 125, 125, .55); white-space: nowrap; }
.tabs { display: flex; align-items: center; gap: 8.5px; height: 30px; padding-left: 7px; font-size: 17px; color: #b8b8b8; white-space: nowrap; }
.t-code { color: #88a0c0; font-size: 18px; margin-right: 18px; }
.t-on { color: #2a7de0; }
.mini { display: block; }
.mini-ax { stroke: #444; stroke-width: 1; fill: none; }
.mini-bars rect { fill: #ff4000; }
.mini-y text { font-size: 15px; fill: #b4b4b4; text-anchor: end; }
.mini-x text { font-size: 15px; fill: #b4b4b4; font-weight: 700; }
.mini-title { font-size: 15.5px; fill: #aaa; }
.fin { display: grid; grid-template-columns: 131px 130px; column-gap: 3px; padding-left: 3px; }
.fin .kv { display: flex; justify-content: space-between; align-items: center; white-space: nowrap; font-size: 17.5px; color: #777; }
.fin b { font-size: 18px; font-weight: 400; color: #aab0b8; }
.fin sup { font-size: 12.5px; line-height: 0; }
.g-a { grid-auto-rows: 26.3px; margin-top: -1.5px; }
.more { height: 14.5px; display: flex; align-items: center; justify-content: center; padding-right: 5px; }
.sep { border-top: 1px solid #333; }
.g-b { grid-auto-rows: 26.1px; padding-top: 0; height: 109px; }
.g-c { grid-auto-rows: 26.1px; padding-top: 4.5px; height: 114px; }
.g-d { grid-template-columns: 166px 100px; column-gap: 0; grid-auto-rows: 26.2px; padding-top: 3.5px; height: 88px; }
.g-d .v2 { text-align: right; align-self: center; white-space: nowrap; }
.news { padding: 4px 0 0 3px; height: 87px; font-size: 18.2px; line-height: 26.3px; color: #b4b4b4; white-space: nowrap; }
.news-last { height: 32px; padding-top: 6px; }
```
